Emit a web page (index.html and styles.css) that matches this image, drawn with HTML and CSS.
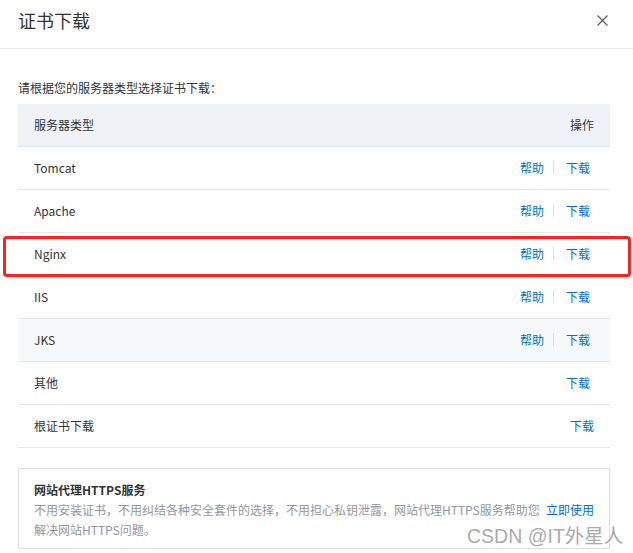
FILE: index.html
```html
<!DOCTYPE html>
<html lang="zh-CN">
<head>
<meta charset="utf-8">
<title>证书下载</title>
<link rel="stylesheet" href="styles.css">
</head>
<body>
<div class="dialog">
  <div class="dlg-header">
    <div class="dlg-title">证书下载</div>
    <span class="dlg-close" aria-label="关闭">
      <svg width="11" height="11" viewBox="0 0 11 11"><path d="M0.5 0.5 L10.5 10.5 M10.5 0.5 L0.5 10.5" stroke="#555" stroke-width="1.1" fill="none"/></svg>
    </span>
  </div>
  <div class="dlg-body">
    <p class="hint">请根据您的服务器类型选择证书下载：</p>
    <div class="cert-table">
      <div class="row head"><span class="name">服务器类型</span><span class="ops">操作</span></div>
      <div class="row"><span class="name">Tomcat</span><span class="ops"><a>帮助</a><i class="sep"></i><a>下载</a></span></div>
      <div class="row"><span class="name">Apache</span><span class="ops"><a>帮助</a><i class="sep"></i><a>下载</a></span></div>
      <div class="row marked"><span class="name">Nginx</span><span class="ops"><a>帮助</a><i class="sep"></i><a>下载</a></span><span class="mark"></span></div>
      <div class="row"><span class="name">IIS</span><span class="ops"><a>帮助</a><i class="sep"></i><a>下载</a></span></div>
      <div class="row hover"><span class="name">JKS</span><span class="ops"><a>帮助</a><i class="sep"></i><a>下载</a></span></div>
      <div class="row"><span class="name">其他</span><span class="ops"><a>下载</a></span></div>
      <div class="row"><span class="name">根证书下载</span><span class="ops root"><a>下载</a></span></div>
    </div>
    <div class="promo">
      <div class="promo-title">网站代理HTTPS服务</div>
      <p class="promo-desc"><a class="promo-link">立即使用</a>不用安装证书，不用纠结各种安全套件的选择，不用担心私钥泄露，网站代理HTTPS服务帮助您<br>解决网站HTTPS问题。</p>
    </div>
  </div>
  <div class="watermark">CSDN @IT外星人</div>
</div>
</body>
</html>
```
FILE: styles.css
```css
* { box-sizing: border-box; }
html, body { margin: 0; padding: 0; background: #fff; }
body {
  font-family: "Noto Sans CJK SC", "Noto Sans", sans-serif;
  color: #333;
  font-size: 12px;
}
.dialog { position: relative; width: 633px; height: 553px; overflow: hidden; }
.dlg-header {
  height: 49px;
  border-bottom: 1px solid #e5e5e5;
  padding: 0 25px 0 18px;
  display: flex;
  justify-content: space-between;
  align-items: flex-start;
}
.dlg-title { font-size: 18px; line-height: 40px; color: #333; }
.dlg-close { display: flex; margin-top: 15px; }
.dlg-body { padding: 29px 23px 0 18px; }
.hint { margin: 0 0 6px; line-height: 20px; font-size: 12px; color: #333; }
.cert-table { display: flex; flex-direction: column; }
.row {
  position: relative;
  display: flex;
  justify-content: space-between;
  align-items: center;
  height: 43px;
  padding: 0 20px 1px 16px;
  border-bottom: 1px solid #e4e6ea;
}
.row.head { background: #eff3f8; padding-right: 16px; border-bottom-color: #e0e3e8; }
.row.hover { background: #f7f8fa; }
.ops { display: flex; align-items: center; }
.ops a { color: #0070cc; text-decoration: none; }
.row .ops.root { margin-right: -4px; }
.sep { display: block; width: 1px; height: 13px; background: #dcdcdc; margin: 0 12px 0 9px; }
.mark {
  position: absolute;
  left: -15px;
  right: -21px;
  top: 3px;
  bottom: -2px;
  border: 3px solid #fa2419;
  border-radius: 4px;
  pointer-events: none;
}
.promo {
  margin-top: 20px;
  border: 1px solid #dedede;
  padding: 11px 15px 8px 15px;
}
.promo-title { font-weight: bold; font-size: 12px; line-height: 20px; color: #333; }
.promo-desc { margin: 0; line-height: 20px; color: #9196a0; }
.promo-link { float: right; color: #0070cc; }
.watermark {
  position: absolute;
  left: 467px;
  top: 520px;
  font-family: "Liberation Sans", "Noto Sans CJK SC", sans-serif;
  font-size: 19.5px;
  color: rgba(130, 130, 130, 0.7);
  text-shadow: 0 0 2px #fff;
  white-space: nowrap;
}
```
